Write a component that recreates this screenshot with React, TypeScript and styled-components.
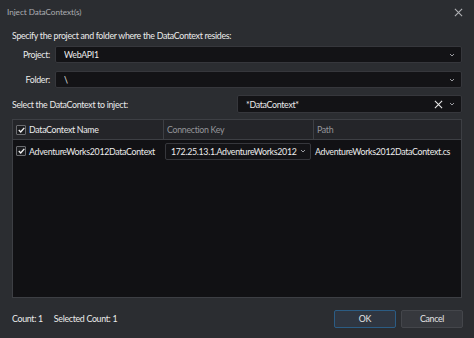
import styled, { createGlobalStyle } from 'styled-components';

const GlobalStyle = createGlobalStyle`
    html, body {
        margin: 0;
        padding: 0;
        background: #2b2d31;
    }
    body {
        font-family: 'Lato', 'Noto Sans', sans-serif;
        font-size: 8.8px;
        letter-spacing: -0.3px;
        color: #ececec;
    }
`;

const Dialog = styled.div`
    width: 474px;
    height: 338px;
    display: flex;
    flex-direction: column;
    background: #2b2d31;
    overflow: hidden;
`;

const TitleBar = styled.div`
    height: 25px;
    display: flex;
    align-items: center;
    justify-content: space-between;
    padding: 0 11px 0 7px;
    color: #acadb1;
    font-size: 8.2px;
    letter-spacing: -0.05px;
`;

const Body = styled.div`
    flex: 1;
    display: flex;
    flex-direction: column;
    padding: 0 12px;
`;

const Hint = styled.div`
    height: 22px;
    display: flex;
    align-items: center;
`;

const Form = styled.div`
    display: grid;
    grid-template-columns: 38px 1fr;
    column-gap: 5px;
    row-gap: 8px;
    align-items: center;
`;

const Label = styled.label`
    text-align: right;
`;

const Combo = styled.div<{ $h?: number }>`
    height: ${(p) => p.$h ?? 17}px;
    box-sizing: border-box;
    display: flex;
    align-items: center;
    gap: 6px;
    padding: 0 6px 0 8px;
    background: #131316;
    border: 1px solid #36373c;
    border-radius: 2px;
    span {
        flex: 1;
        white-space: nowrap;
        overflow: hidden;
    }
`;

const SelectRow = styled.div`
    display: grid;
    grid-template-columns: 1fr 225px;
    align-items: center;
    margin-top: 7px;
`;

const Grid = styled.div`
    margin-top: 6px;
    height: 179px;
    box-sizing: border-box;
    border: 1px solid #3d3f44;
    background: #111114;
    display: flex;
    flex-direction: column;
`;

const Row = styled.div<{ $head?: boolean }>`
    display: grid;
    grid-template-columns: 150px 150px 1fr;
    height: ${(p) => (p.$head ? 19 : 22)}px;
    background: ${(p) => (p.$head ? '#242529' : 'transparent')};
    border-bottom: ${(p) => (p.$head ? '1px solid #3d3f44' : 'none')};
`;

const Cell = styled.div<{ $dim?: boolean; $divider?: boolean; $pad?: number }>`
    display: flex;
    align-items: center;
    gap: 3px;
    padding: 0 ${(p) => p.$pad ?? 3}px;
    color: ${(p) => (p.$dim ? '#94959a' : '#ececec')};
    white-space: nowrap;
    overflow: hidden;
    border-left: ${(p) => (p.$divider ? '1px solid #3d3f44' : 'none')};
`;

const Check = styled.span`
    width: 8px;
    height: 8px;
    flex: none;
    border: 1px solid #6b6c70;
    border-radius: 1px;
    background: #1b1c1f;
    display: flex;
    align-items: center;
    justify-content: center;
`;

const CellCombo = styled(Combo)`
    width: 146px;
    gap: 2px;
    padding: 0 4px 0 5px;
    span {
        overflow: visible;
    }
`;

const Footer = styled.div`
    height: 40px;
    display: flex;
    align-items: center;
    justify-content: space-between;
    padding-top: 1px;
    box-sizing: border-box;
`;

const Counts = styled.div`
    display: flex;
    gap: 11px;
`;

const Buttons = styled.div`
    display: flex;
    gap: 5px;
    margin-right: -1px;
`;

const Button = styled.button<{ $primary?: boolean }>`
    width: 62px;
    height: 18px;
    box-sizing: border-box;
    font: inherit;
    letter-spacing: inherit;
    color: #e4e4e4;
    background: ${(p) => (p.$primary ? '#2f3641' : '#36383d')};
    border: 1px solid ${(p) => (p.$primary ? '#2b5c84' : '#44464b')};
    border-radius: 2px;
    padding: 0;
`;

const Icon = styled.svg`
    flex: none;
    display: block;
`;

const Chevron = () => (
    <Icon width="6" height="4" viewBox="0 0 6 4">
        <path d="M1 1 L3 3 L5 1" fill="none" stroke="#9a9ba0" strokeWidth="1" />
    </Icon>
);

const Cross = ({ size, color }: { size: number; color: string }) => (
    <Icon width={size} height={size} viewBox="0 0 10 10">
        <path d="M1 1 L9 9 M9 1 L1 9" fill="none" stroke={color} strokeWidth="1.2" />
    </Icon>
);

const Tick = () => (
    <Icon width="7" height="6" viewBox="0 0 7 6">
        <path d="M0.8 3 L2.7 4.9 L6.3 0.9" fill="none" stroke="#f2f2f2" strokeWidth="1.4" />
    </Icon>
);

function App() {
    return (
        <Dialog>
            <GlobalStyle />
            <TitleBar>
                <span>Inject DataContext(s)</span>
                <Cross size={9} color="#b0b1b5" />
            </TitleBar>
            <Body>
                <Hint>Specify the project and folder where the DataContext resides:</Hint>
                <Form>
                    <Label>Project:</Label>
                    <Combo>
                        <span>WebAPI1</span>
                        <Chevron />
                    </Combo>
                    <Label>Folder:</Label>
                    <Combo>
                        <span>\</span>
                        <Chevron />
                    </Combo>
                </Form>
                <SelectRow>
                    <span>Select the DataContext to inject:</span>
                    <Combo $h={18}>
                        <span>*DataContext*</span>
                        <Cross size={9} color="#e8e8e8" />
                        <Chevron />
                    </Combo>
                </SelectRow>
                <Grid>
                    <Row $head>
                        <Cell>
                            <Check>
                                <Tick />
                            </Check>
                            DataContext Name
                        </Cell>
                        <Cell $dim $divider>Connection Key</Cell>
                        <Cell $dim $divider>Path</Cell>
                    </Row>
                    <Row>
                        <Cell>
                            <Check>
                                <Tick />
                            </Check>
                            AdventureWorks2012DataContext
                        </Cell>
                        <Cell $pad={2}>
                            <CellCombo>
                                <span>172.25.13.1.AdventureWorks2012</span>
                                <Chevron />
                            </CellCombo>
                        </Cell>
                        <Cell $pad={2}>AdventureWorks2012DataContext.cs</Cell>
                    </Row>
                </Grid>
                <Footer>
                    <Counts>
                        <span>Count: 1</span>
                        <span>Selected Count: 1</span>
                    </Counts>
                    <Buttons>
                        <Button $primary>OK</Button>
                        <Button>Cancel</Button>
                    </Buttons>
                </Footer>
            </Body>
        </Dialog>
    );
}

export default App;
